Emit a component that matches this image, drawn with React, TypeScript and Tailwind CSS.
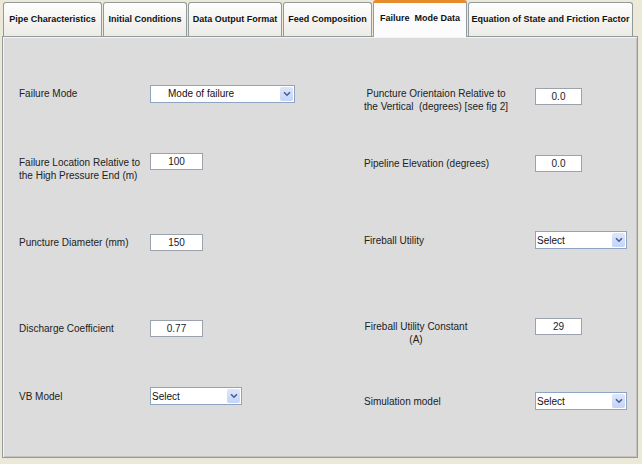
import { ReactNode } from 'react'
import clsx from 'clsx'

const tabs = [
  { label: 'Pipe Characteristics', w: 'w-[99px]' },
  { label: 'Initial Conditions', w: 'w-[84px]' },
  { label: 'Data Output Format', w: 'w-[94px]' },
  { label: 'Feed Composition', w: 'w-[89px]' },
  { label: 'Failure  Mode Data', w: 'w-[94px]', active: true },
  { label: 'Equation of State and Friction Factor', w: 'w-[165px]' },
]

function Tab({ label, w, active }: { label: string; w: string; active?: boolean }) {
  return (
    <div
      className={clsx(
        'flex items-center justify-center rounded-t-[3px] border border-b-0 border-[#919b9c] text-[9px] font-bold text-[#111] whitespace-pre',
        w,
        active
          ? 'relative z-10 h-[37px] -mb-px border-t-[3px] border-t-[#e68b2c] bg-[#fcfcfe] pb-[2px]'
          : 'h-[34px] bg-gradient-to-b from-[#fefefe] to-[#ecebe6] pt-[1px]'
      )}
    >
      {label}
    </div>
  )
}

function TextBox({ value, w }: { value: string; w: string }) {
  return (
    <div
      className={clsx(
        'flex h-[17px] items-center justify-center border border-[#9aa3ad] bg-white text-[10px] text-[#222]',
        w
      )}
    >
      {value}
    </div>
  )
}

function Combo({ text, w, indent }: { text: string; w: string; indent?: boolean }) {
  return (
    <div
      className={clsx(
        'flex h-[18px] items-center justify-between border border-[#8fa4c0] bg-white pr-[1px] text-[10px] text-[#111]',
        w,
        indent ? 'pl-[17px]' : 'pl-[1px]'
      )}
    >
      <span>{text}</span>
      <span className="flex h-[14px] w-[13px] items-center justify-center rounded-[2px] bg-gradient-to-b from-[#dde7fc] to-[#c3d4f7]">
        <svg width="8" height="6" viewBox="0 0 8 6">
          <path d="M1 1.2 L4 4.2 L7 1.2" fill="none" stroke="#4a5f8a" strokeWidth="1.6" />
        </svg>
      </span>
    </div>
  )
}

function Label({ children, className }: { children: ReactNode; className?: string }) {
  return <div className={clsx('text-[10px] leading-[13px] text-[#222]', className)}>{children}</div>
}

export default function App() {
  return (
    <div className="h-[464px] w-[642px] overflow-hidden bg-[#ece9d8] font-['Liberation_Sans',Arial,sans-serif]">
      <div className="flex h-[36px] items-end gap-[1px] pl-[3px]">
        {tabs.map((t) => (
          <Tab key={t.label} {...t} />
        ))}
      </div>

      <div className="ml-[2px] flex h-[422px] w-[636px] border border-[#919b9c] bg-[#dcdcdc] shadow-[inset_1px_1px_0_#f4f4f4,inset_-1px_-1px_0_#c4c4c4]">
        {/* left column */}
        <div className="flex w-[361px] flex-col pl-[16px]">
          <div className="mt-[47px] flex h-[19px] items-center">
            <Label className="w-[131px]">Failure Mode</Label>
            <Combo text="Mode of failure" w="w-[145px]" indent />
          </div>
          <div className="mt-[50px] flex h-[30px] items-start">
            <Label className="mt-[3px] w-[131px]">
              Failure Location Relative to
              <br />
              the High Pressure End (m)
            </Label>
            <TextBox value="100" w="w-[53px]" />
          </div>
          <div className="mt-[50px] flex h-[18px] items-center">
            <Label className="w-[131px]">Puncture Diameter (mm)</Label>
            <TextBox value="150" w="w-[53px]" />
          </div>
          <div className="mt-[68px] flex h-[18px] items-center">
            <Label className="w-[131px]">Discharge Coefficient</Label>
            <TextBox value="0.77" w="w-[53px]" />
          </div>
          <div className="mt-[50px] flex h-[18px] items-center">
            <Label className="w-[131px]">VB Model</Label>
            <Combo text="Select" w="w-[92px]" />
          </div>
        </div>

        {/* right column */}
        <div className="flex flex-1 flex-col">
          <div className="mt-[50px] flex h-[26px] items-start">
            <div className="w-[171px]">
              <Label className="w-fit text-center">
                Puncture Orientaion Relative to
                <br />
                the Vertical&nbsp; (degrees) [see fig 2]
              </Label>
            </div>
            <div className="mt-[1px]">
              <TextBox value="0.0" w="w-[47px]" />
            </div>
          </div>
          <div className="mt-[42px] flex h-[17px] items-center">
            <Label className="w-[171px]">Pipeline Elevation (degrees)</Label>
            <TextBox value="0.0" w="w-[47px]" />
          </div>
          <div className="mt-[59px] flex h-[18px] items-center">
            <Label className="w-[171px]">Fireball Utility</Label>
            <Combo text="Select" w="w-[92px]" />
          </div>
          <div className="mt-[69px] flex h-[28px] items-start">
            <div className="w-[171px]">
              <Label className="mt-[2px] w-[104px] text-center">
                Fireball Utility Constant
                <br />
                (A)
              </Label>
            </div>
            <TextBox value="29" w="w-[47px]" />
          </div>
          <div className="mt-[46px] flex h-[18px] items-center">
            <Label className="w-[171px]">Simulation model</Label>
            <Combo text="Select" w="w-[92px]" />
          </div>
        </div>
      </div>
    </div>
  )
}
